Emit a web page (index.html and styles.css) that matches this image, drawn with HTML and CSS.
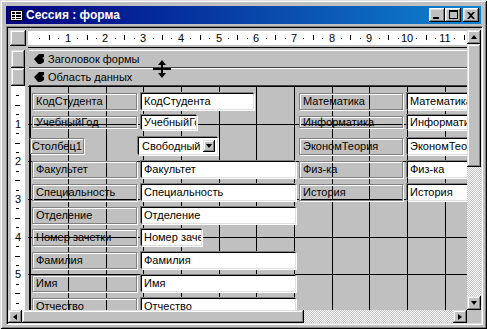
FILE: index.html
```html
<!DOCTYPE html>
<html lang="ru">
<head>
    <meta charset="UTF-8">
    <title>Сессия : форма</title>
    <link rel="stylesheet" href="styles.css">
</head>
<body>
<div class="window">
    <!-- Заголовок окна -->
    <div class="titlebar">
        <svg class="app-icon" width="13" height="11" viewBox="0 0 13 11">
            <rect x="0.5" y="0.5" width="12" height="10" fill="#fff" stroke="#000"/>
            <rect x="2" y="2" width="3" height="2" fill="#000"/>
            <rect x="6" y="2" width="5" height="2" fill="#000"/>
            <rect x="2" y="5" width="3" height="2" fill="#000"/>
            <rect x="6" y="5" width="5" height="2" fill="#000"/>
            <rect x="2" y="8" width="3" height="1" fill="#000"/>
            <rect x="6" y="8" width="5" height="1" fill="#000"/>
        </svg>
        <span class="title">Сессия : форма</span>
        <div class="caption-buttons">
            <div class="cap-btn"><span class="glyph-min"></span></div>
            <div class="cap-btn"><span class="glyph-max"></span></div>
            <div class="cap-btn close">
                <svg width="8" height="7" viewBox="0 0 8 7">
                    <path d="M0 0h2l2 2 2-2h2L5 3.5 8 7H6L4 5 2 7H0l3-3.5z" fill="#000"/>
                </svg>
            </div>
        </div>
    </div>

    <div class="client">
        <div class="designer">
            <div class="corner raised"></div>

            <!-- Горизонтальная линейка -->
            <div class="hruler">
                <svg width="439" height="14" class="ruler-svg">
                    <rect width="439" height="14" fill="#fff"/>
                    <g fill="#000">
                        <rect x="11" y="7" width="1" height="1"/><rect x="21" y="4" width="1" height="5"/><rect x="30" y="7" width="1" height="1"/>
                        <rect x="49" y="7" width="1" height="1"/><rect x="59" y="4" width="1" height="5"/><rect x="68" y="7" width="1" height="1"/>
                        <rect x="87" y="7" width="1" height="1"/><rect x="96" y="4" width="1" height="5"/><rect x="106" y="7" width="1" height="1"/>
                        <rect x="125" y="7" width="1" height="1"/><rect x="134" y="4" width="1" height="5"/><rect x="143" y="7" width="1" height="1"/>
                        <rect x="162" y="7" width="1" height="1"/><rect x="172" y="4" width="1" height="5"/><rect x="181" y="7" width="1" height="1"/>
                        <rect x="200" y="7" width="1" height="1"/><rect x="209" y="4" width="1" height="5"/><rect x="219" y="7" width="1" height="1"/>
                        <rect x="238" y="7" width="1" height="1"/><rect x="247" y="4" width="1" height="5"/><rect x="257" y="7" width="1" height="1"/>
                        <rect x="275" y="7" width="1" height="1"/><rect x="285" y="4" width="1" height="5"/><rect x="294" y="7" width="1" height="1"/>
                        <rect x="313" y="7" width="1" height="1"/><rect x="322" y="4" width="1" height="5"/><rect x="332" y="7" width="1" height="1"/>
                        <rect x="351" y="7" width="1" height="1"/><rect x="360" y="4" width="1" height="5"/><rect x="370" y="7" width="1" height="1"/>
                        <rect x="388" y="7" width="1" height="1"/><rect x="398" y="4" width="1" height="5"/><rect x="407" y="7" width="1" height="1"/>
                        <rect x="426" y="7" width="1" height="1"/><rect x="436" y="4" width="1" height="5"/>
                    </g>
                    <g class="ruler-num" text-anchor="middle">
                        <text x="40" y="11">1</text><text x="77" y="11">2</text><text x="115" y="11">3</text>
                        <text x="153" y="11">4</text><text x="191" y="11">5</text><text x="228" y="11">6</text>
                        <text x="266" y="11">7</text><text x="304" y="11">8</text><text x="341" y="11">9</text>
                        <text x="379" y="11">10</text><text x="417" y="11">11</text>
                    </g>
                </svg>
            </div>

            <!-- Вертикальная прокрутка -->
            <div class="vscroll">
                <div class="sb-btn raised"><span class="arr-up"></span></div>
                <div class="sb-thumb-v raised"></div>
                <div class="sb-track"></div>
                <div class="sb-btn raised"><span class="arr-down"></span></div>
            </div>

            <div class="selectors">
                <div class="sel raised"></div>
                <div class="sel raised"></div>
            </div>

            <!-- Вертикальная линейка -->
            <div class="vruler">
                <svg width="14" height="224" class="ruler-svg">
                    <g fill="#000">
                        <rect x="5" y="9" width="3" height="1"/><rect x="4" y="19" width="5" height="1"/><rect x="5" y="28" width="3" height="1"/>
                        <rect x="5" y="47" width="3" height="1"/><rect x="4" y="57" width="5" height="1"/><rect x="5" y="66" width="3" height="1"/>
                        <rect x="5" y="85" width="3" height="1"/><rect x="4" y="94" width="5" height="1"/><rect x="5" y="104" width="3" height="1"/>
                        <rect x="5" y="122" width="3" height="1"/><rect x="4" y="132" width="5" height="1"/><rect x="5" y="141" width="3" height="1"/>
                        <rect x="5" y="160" width="3" height="1"/><rect x="4" y="170" width="5" height="1"/><rect x="5" y="179" width="3" height="1"/>
                        <rect x="5" y="198" width="3" height="1"/><rect x="4" y="207" width="5" height="1"/><rect x="5" y="217" width="3" height="1"/>
                    </g>
                    <g class="ruler-num" text-anchor="middle">
                        <text x="7" y="42">1</text><text x="7" y="79">2</text><text x="7" y="117">3</text>
                        <text x="7" y="155">4</text><text x="7" y="192">5</text>
                    </g>
                </svg>
            </div>

            <div class="sections">
                <div class="section-bar">
                    <svg class="sec-glyph" width="10" height="10" viewBox="0 0 10 10">
                        <path d="M0 5L5 0h5v3L8 4l2 1v3l-3 2H4z" fill="#000"/>
                    </svg>
                    Заголовок формы
                </div>
                <div class="section-bar">
                    <svg class="sec-glyph" width="10" height="10" viewBox="0 0 10 10">
                        <path d="M0 5L5 0h5v3L8 4l2 1v3l-3 2H4z" fill="#000"/>
                    </svg>
                    Область данных
                </div>
            </div>

            <!-- Область данных: сетка и элементы управления -->
            <div class="detail">
                <svg class="grid" width="439" height="224">
                    <g fill="#000">
                        <rect x="1" y="0" width="2" height="224"/>
                        <rect x="40" y="0" width="1" height="224"/>
                        <rect x="78" y="0" width="1" height="224"/>
                        <rect x="115" y="0" width="1" height="224"/>
                        <rect x="153" y="0" width="1" height="224"/>
                        <rect x="191" y="0" width="1" height="224"/>
                        <rect x="228" y="0" width="1" height="224"/>
                        <rect x="266" y="0" width="1" height="224"/>
                        <rect x="304" y="0" width="1" height="224"/>
                        <rect x="341" y="0" width="1" height="224"/>
                        <rect x="379" y="0" width="1" height="224"/>
                        <rect x="417" y="0" width="1" height="224"/>
                        <rect x="0" y="0" width="439" height="1"/>
                        <rect x="0" y="38" width="439" height="1"/>
                        <rect x="0" y="75" width="439" height="1"/>
                        <rect x="0" y="113" width="439" height="1"/>
                        <rect x="0" y="151" width="439" height="1"/>
                        <rect x="0" y="188" width="439" height="1"/>
                    </g>
                </svg>

                <div class="lbl left r1">КодСтудента</div>
                <div class="txt left r1 w-kod">КодСтудента</div>

                <div class="lbl left thin">УчебныйГод</div>
                <div class="txt left r2 w-god">УчебныйГод</div>

                <div class="lbl col1">Столбец1</div>
                <div class="combo">Свободный<span class="combo-btn raised"><span class="arr-down"></span></span></div>

                <div class="lbl left r4">Факультет</div>
                <div class="txt left r4">Факультет</div>

                <div class="lbl left r5">Специальность</div>
                <div class="txt left r5">Специальность</div>

                <div class="lbl left r6">Отделение</div>
                <div class="txt left r6">Отделение</div>

                <div class="lbl left r7">Номер зачетки</div>
                <div class="txt left r7 w-zach">Номер зачетки</div>

                <div class="lbl left r8">Фамилия</div>
                <div class="txt left r8">Фамилия</div>

                <div class="lbl left r9">Имя</div>
                <div class="txt left r9">Имя</div>

                <div class="lbl left r10">Отчество</div>
                <div class="txt left r10">Отчество</div>

                <div class="lbl right r1">Математика</div>
                <div class="txt right r1">Математика</div>

                <div class="lbl right thin">Информатика</div>
                <div class="txt right r2">Информатика</div>

                <div class="lbl right r3">ЭкономТеория</div>
                <div class="txt right r3">ЭкономТеория</div>

                <div class="lbl right r4">Физ-ка</div>
                <div class="txt right r4">Физ-ка</div>

                <div class="lbl right r5">История</div>
                <div class="txt right r5">История</div>
            </div>

            <!-- Горизонтальная прокрутка -->
            <div class="hscroll">
                <div class="sb-btn raised"><span class="arr-left"></span></div>
                <div class="sb-thumb-h raised"></div>
                <div class="sb-track"></div>
                <div class="sb-btn raised"><span class="arr-right"></span></div>
            </div>
            <div class="size-corner"></div>
        </div>
    </div>

    <!-- курсор изменения размера раздела -->
    <svg class="cursor" width="18" height="19" viewBox="0 0 18 19">
        <path d="M9 0l4 5h-3v3h8v2h-8v3h3l-4 5-4-5h3v-3H0V8h8V5H5z" fill="#000"/>
    </svg>
</div>
</body>
</html>
```

FILE: styles.css
```css
* {
    box-sizing: border-box;
}
body {
    margin: 0;
    background: #c0c0c0;
    font-family: "Liberation Sans", Arial, sans-serif;
    font-size: 11px;
    color: #000;
}
.window {
    position: relative;
    width: 487px;
    height: 329px;
    background: #c0c0c0;
    padding: 6px 4px 4px 6px;
    display: flex;
    flex-direction: column;
    box-shadow: inset 1px 1px #dfdfdf, inset -1px -1px #000, inset 2px 2px #fff, inset -2px -2px #808080;
}
.raised {
    background: #c0c0c0;
    box-shadow: inset -1px -1px #000, inset 1px 1px #dfdfdf, inset -2px -2px #808080, inset 2px 2px #fff;
}

/* заголовок */
.titlebar {
    height: 18px;
    flex: none;
    margin: 0 2px 2px 0;
    padding-left: 4px;
    display: flex;
    align-items: center;
    background: linear-gradient(to right, #000080, #1084d0);
    color: #fff;
}
.app-icon {
    display: block;
}
.title {
    margin-left: 3px;
    font-weight: bold;
    font-size: 12px;
    white-space: nowrap;
}
.caption-buttons {
    margin-left: auto;
    margin-right: 2px;
    display: flex;
}
.cap-btn {
    width: 16px;
    height: 14px;
    background: #c0c0c0;
    box-shadow: inset -1px -1px #000, inset 1px 1px #fff, inset -2px -2px #808080, inset 2px 2px #dfdfdf;
    display: flex;
    align-items: center;
    justify-content: center;
}
.cap-btn.close {
    margin-left: 2px;
}
.cap-btn svg {
    display: block;
}
.glyph-min {
    width: 6px;
    height: 2px;
    background: #000;
    margin: 6px 3px 0 0;
}
.glyph-max {
    width: 9px;
    height: 9px;
    border: 1px solid #000;
    border-top-width: 2px;
    margin-bottom: 1px;
}

/* рабочая область */
.client {
    flex: 1;
    padding: 1px;
    border: 1px solid;
    border-color: #808080 #fff #fff #808080;
    box-shadow: inset 1px 1px #000, inset -1px -1px #dfdfdf;
}
.designer {
    height: 100%;
    display: grid;
    grid-template-columns: 20px 439px 14px;
    grid-template-rows: 20px 38px 224px 13px;
}
.corner {
    grid-area: 1 / 1;
    margin: 2px;
}
.hruler {
    grid-area: 1 / 2;
    padding-top: 3px;
    border-bottom: 1px solid #000;
}
.ruler-svg {
    display: block;
}
.ruler-num {
    font-family: "Liberation Sans", Arial, sans-serif;
    font-size: 11px;
    fill: #000;
}
.vscroll {
    grid-column: 3;
    grid-row: 1 / 4;
    margin-top: 2px;
    display: flex;
    flex-direction: column;
}
.sb-btn {
    width: 14px;
    height: 14px;
    flex: none;
    display: flex;
    align-items: center;
    justify-content: center;
}
.sb-thumb-v {
    height: 123px;
    flex: none;
}
.sb-thumb-h {
    width: 282px;
    flex: none;
}
.sb-track {
    flex: 1;
    background-image: conic-gradient(#c0c0c0 0 25%, #fff 0 50%, #c0c0c0 0 75%, #fff 0);
    background-size: 2px 2px;
}
.arr-up, .arr-down, .arr-left, .arr-right {
    width: 0;
    height: 0;
    border: 0 solid transparent;
}
.arr-up {
    width: 1px;
    border-left-width: 3px;
    border-right-width: 3px;
    border-bottom: 4px solid #000;
}
.arr-down {
    width: 1px;
    border-left-width: 3px;
    border-right-width: 3px;
    border-top: 4px solid #000;
}
.arr-left {
    height: 1px;
    border-top-width: 3px;
    border-bottom-width: 3px;
    border-right: 4px solid #000;
}
.arr-right {
    height: 1px;
    border-top-width: 3px;
    border-bottom-width: 3px;
    border-left: 4px solid #000;
}
.selectors {
    grid-area: 2 / 1;
    padding: 2px 3px 0 3px;
}
.sel {
    height: 18px;
}
.vruler {
    grid-area: 3 / 1;
    margin: 0 3px;
    background: #fff;
}
.sections {
    grid-area: 2 / 2;
    padding: 2px 0 0 1px;
}
.section-bar {
    height: 18px;
    border-top: 1px solid #fff;
    border-bottom: 1px solid #404040;
    background: #c0c0c0;
    display: flex;
    align-items: center;
    padding-left: 5px;
    white-space: nowrap;
}
.sec-glyph {
    margin-right: 4px;
    flex: none;
}
.hscroll {
    grid-row: 4;
    grid-column: 1 / 3;
    display: flex;
}
.hscroll .sb-btn {
    height: 13px;
}
.size-corner {
    grid-area: 4 / 3;
}

/* область данных */
.detail {
    grid-area: 3 / 2;
    position: relative;
    overflow: hidden;
    background: #c0c0c0;
}
.grid {
    position: absolute;
    left: 0;
    top: 0;
}
.lbl, .txt, .combo {
    position: absolute;
    height: 17px;
    line-height: 15px;
    white-space: nowrap;
    overflow: hidden;
}
.lbl {
    padding-left: 3px;
    border: 1px solid #808080;
    box-shadow: inset 1px 1px #fff, 1px 1px #fff;
    overflow: visible;
}
.txt, .combo {
    background: #fff;
    padding-left: 2px;
    border: 1px solid;
    border-color: #000 #dfdfdf #dfdfdf #000;
    box-shadow: -1px -1px #808080, 1px 1px #fff;
}
.lbl.left { left: 4px; width: 105px; }
.lbl.right { left: 271px; width: 104px; }
.txt.left { left: 113px; width: 155px; }
.txt.right { left: 379px; width: 100px; }
.txt.w-kod { width: 113px; }
.txt.w-god { width: 56px; }
.txt.w-zach { width: 61px; }

.r1 { top: 7px; }
.r2 { top: 29px; height: 15px; line-height: 13px; }
.r3 { top: 52px; }
.r4 { top: 75px; }
.r5 { top: 98px; }
.r6 { top: 121px; }
.r7 { top: 143px; }
.r8 { top: 166px; }
.r9 { top: 189px; }
.r10 { top: 212px; }

.lbl.thin {
    top: 30px;
    height: 12px;
    line-height: 10px;
}
.lbl.col1 {
    left: 2px;
    top: 52px;
    width: 54px;
    height: 16px;
    line-height: 14px;
    padding-left: 1px;
}
.combo {
    left: 110px;
    top: 51px;
    width: 80px;
    height: 18px;
    line-height: 16px;
    padding-left: 3px;
}
.combo-btn {
    position: absolute;
    right: 2px;
    top: 2px;
    width: 12px;
    height: 12px;
    display: flex;
    align-items: center;
    justify-content: center;
}

.cursor {
    position: absolute;
    left: 153px;
    top: 60px;
}
```
